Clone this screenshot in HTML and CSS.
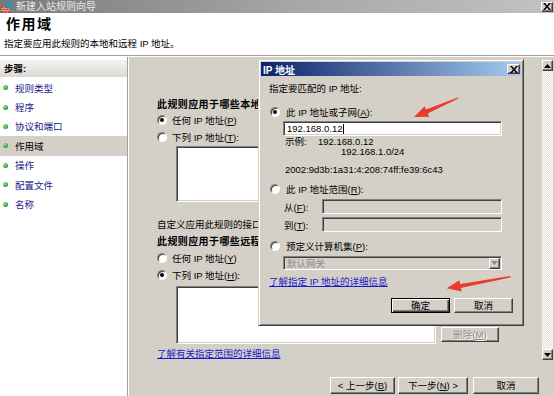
FILE: index.html
```html
<!DOCTYPE html>
<html lang="zh-CN">
<head>
    <meta charset="UTF-8">
    <title>新建入站规则向导</title>
    <link rel="stylesheet" href="styles.css">
</head>
<body>
    <div class="window">
        <div class="titlebar">
            <svg class="app-icon" width="12" height="12" viewBox="0 0 12 12">
                <rect x="0" y="5" width="9" height="7" fill="#b8432c"/>
                <path d="M0 7.3h9M0 9.6h9M3 5v2.3M6 5v2.3M1.5 7.3v2.3M4.5 7.3v2.3M7.5 7.3v2.3M3 9.6V12M6 9.6V12" stroke="#e9c9a8" stroke-width="0.7"/>
                <circle cx="8" cy="4" r="3.6" fill="#2f7ed8"/>
                <path d="M6 2.2c1 .4 1.2 1.4.6 2.2.8.3 1 1.2.5 2M8.6 1c.2.9 1.2 1.2 2 1.4M9.2 5.3c.7-.2 1.4.3 1.8 1" stroke="#4fbf3a" stroke-width="1.1" fill="none"/>
            </svg>
            <span class="title">新建入站规则向导</span>
            <span class="close-btn">
                <svg width="8" height="7" viewBox="0 0 8 7"><path d="M0 0h2l2 2.4 2-2.4h2l-3 3.5 3 3.5h-2l-2-2.4-2 2.4h-2l3-3.5z" fill="#000"/></svg>
            </span>
        </div>

        <div class="header">
            <h1>作用域</h1>
            <p>指定要应用此规则的本地和远程 IP 地址。</p>
        </div>

        <div class="body">
            <aside class="steps">
                <div class="steps-head">步骤:</div>
                <ul>
                    <li><i class="dot"></i>规则类型</li>
                    <li><i class="dot"></i>程序</li>
                    <li><i class="dot"></i>协议和端口</li>
                    <li class="current"><i class="dot"></i>作用域</li>
                    <li><i class="dot"></i>操作</li>
                    <li><i class="dot"></i>配置文件</li>
                    <li><i class="dot"></i>名称</li>
                </ul>
            </aside>

            <main class="pane">
                <div class="scroll">
                    <div class="content">
                        <div class="q">此规则应用于哪些本地 IP 地址?</div>
                        <div class="radio-row"><span class="radio checked"></span><span>任何 IP 地址(<u>P</u>)</span></div>
                        <div class="radio-row"><span class="radio"></span><span>下列 IP 地址(<u>T</u>):</span></div>
                        <div class="list-row first">
                            <div class="field list"></div>
                        </div>

                        <div class="note">自定义应用此规则的接口类型:</div>
                        <div class="q">此规则应用于哪些远程 IP 地址?</div>
                        <div class="radio-row"><span class="radio"></span><span>任何 IP 地址(<u>Y</u>)</span></div>
                        <div class="radio-row"><span class="radio checked"></span><span>下列 IP 地址(<u>H</u>):</span></div>
                        <div class="list-row second">
                            <div class="field list"></div>
                            <div class="list-btns">
                                <button class="btn disabled">删除(<u>M</u>)</button>
                            </div>
                        </div>
                        <a class="link main-link" href="#">了解有关指定范围的详细信息</a>
                    </div>

                    <div class="vscroll">
                        <div class="sb-btn">
                            <svg width="7" height="4" viewBox="0 0 7 4"><path d="M3.5 0L7 4H0z" fill="#000"/></svg>
                        </div>
                        <div class="sb-track"></div>
                        <div class="sb-btn">
                            <svg width="7" height="4" viewBox="0 0 7 4"><path d="M0 0h7L3.5 4z" fill="#000"/></svg>
                        </div>
                    </div>
                </div>

                <div class="bar">
                    <button class="btn nav back">&lt; 上一步(<u>B</u>)</button>
                    <button class="btn nav next">下一步(<u>N</u>) &gt;</button>
                    <button class="btn nav cancel">取消</button>
                </div>
            </main>
        </div>
    </div>

    <div class="dialog">
        <div class="dlg-title">
            <span>IP 地址</span>
            <span class="close-btn">
                <svg width="8" height="7" viewBox="0 0 8 7"><path d="M0 0h2l2 2.4 2-2.4h2l-3 3.5 3 3.5h-2l-2-2.4-2 2.4h-2l3-3.5z" fill="#000"/></svg>
            </span>
        </div>
        <div class="dlg-body">
            <div class="dlg-intro">指定要匹配的 IP 地址:</div>

            <div class="radio-row dlg-radio first"><span class="radio checked"></span><span>此 IP 地址或子网(<u>A</u>):</span></div>
            <div class="field dlg-input">192.168.0.12<span class="caret"></span></div>
            <div class="example">
                <div class="ex-line"><span class="ex-label">示例:</span><span>192.168.0.12</span></div>
                <div class="ex-line indent">192.168.1.0/24</div>
            </div>
            <div class="ipv6">2002:9d3b:1a31:4:208:74ff:fe39:6c43</div>

            <div class="radio-row dlg-radio range"><span class="radio"></span><span>此 IP 地址范围(<u>R</u>):</span></div>
            <div class="range-row">
                <span class="range-label">从(<u>F</u>):</span>
                <div class="field disabled range-input"></div>
            </div>
            <div class="range-row">
                <span class="range-label">到(<u>T</u>):</span>
                <div class="field disabled range-input"></div>
            </div>

            <div class="radio-row dlg-radio preset"><span class="radio"></span><span>预定义计算机集(<u>P</u>):</span></div>
            <div class="field disabled select">
                <span>默认网关</span>
                <span class="drop">
                    <svg width="7" height="4" viewBox="0 0 7 4"><path d="M0 0h7L3.5 4z" fill="#8a8a8a"/></svg>
                </span>
            </div>

            <a class="link dlg-link" href="#">了解指定 IP 地址的详细信息</a>

            <div class="dlg-buttons">
                <button class="btn default">确定</button>
                <button class="btn">取消</button>
            </div>
        </div>
    </div>

    <svg class="arrows" width="554" height="396" viewBox="0 0 554 396">
        <polygon points="414,117 424.6,106.2 425.9,109.6 457.8,97.4 458.3,98.6 427.7,113.4 429.4,116.8" fill="#ea3b2e"/>
        <polygon points="446.7,288.3 459.4,280.2 460.1,283.9 510.2,276 510.4,277.4 460.9,287.9 461.7,291.4" fill="#ea3b2e"/>
    </svg>
</body>
</html>
```

FILE: styles.css
```css
* {
    box-sizing: border-box;
}

body {
    margin: 0;
    width: 554px;
    height: 396px;
    overflow: hidden;
    position: relative;
    background: #d4d0c8;
    font-family: "Liberation Sans", "Noto Sans CJK SC", sans-serif;
    font-size: 9.5px;
    color: #000;
}

u {
    text-decoration: underline;
    text-underline-offset: 1px;
}

.window {
    display: flex;
    flex-direction: column;
    height: 396px;
}

/* title bar */
.titlebar {
    height: 13px;
    display: flex;
    align-items: center;
    gap: 3px;
    padding: 0 1px;
    background: linear-gradient(to right, #7a7a7a, #a8a8a8 55%, #c2c2c2);
    color: #eceae4;
    font-size: 10px;
    line-height: 13px;
}

.titlebar .title {
    flex: 1;
}

.close-btn {
    width: 12px;
    height: 10px;
    display: flex;
    align-items: center;
    justify-content: center;
    background: #d4d0c8;
    border: 1px solid;
    border-color: #fff #404040 #404040 #fff;
    box-shadow: inset -1px -1px #808080;
}

/* header */
.header {
    height: 43px;
    background: #fff;
    padding: 2px 0 0 4px;
    border-bottom: 1px solid #a0a0a0;
}

.header h1 {
    margin: 0 0 0 2px;
    font-size: 14px;
    line-height: 18px;
    letter-spacing: 1.5px;
    font-weight: bold;
}

.header p {
    margin: 3px 0 0 0;
    line-height: 15px;
}

.body {
    flex: 1;
    display: flex;
    min-height: 0;
    border-top: 1px solid #fff;
}

/* steps */
.steps {
    width: 128px;
    background: #fff;
    border-right: 1px solid #a0a0a0;
    padding-top: 2px;
}

.steps-head {
    height: 18px;
    line-height: 18px;
    padding-left: 4px;
    font-weight: bold;
    background: linear-gradient(to bottom, #f4f3f0, #dcd9d2);
    border-top: 1px solid #fff;
}

.steps ul {
    list-style: none;
    margin: 0;
    padding: 1px 0 0 0;
}

.steps li {
    height: 19.4px;
    display: flex;
    align-items: center;
    padding-left: 3px;
    color: #22228a;
}

.steps li.current {
    background: #d4d0c8;
    color: #000;
}

.dot {
    width: 5px;
    height: 5px;
    border-radius: 50%;
    background: radial-gradient(circle at 35% 35%, #9de58e, #3aa832 60%, #2a7d25);
    margin-right: 7px;
}

/* main pane */
.pane {
    flex: 1;
    display: flex;
    flex-direction: column;
    border-left: 1px solid #fff;
    min-width: 0;
}

.scroll {
    flex: 1;
    display: flex;
    min-height: 0;
}

.content {
    flex: 1;
    padding: 40px 0 0 28px;
    overflow: hidden;
    display: flex;
    flex-direction: column;
    align-items: flex-start;
}

/* these lines run in under the dialog, so they stop at its edge */
.q,
.note {
    max-width: 101px;
    overflow: hidden;
    white-space: nowrap;
}

.q {
    font-weight: bold;
    font-size: 10px;
    line-height: 15px;
    letter-spacing: 0.4px;
}

.radio-row {
    height: 17px;
    display: flex;
    align-items: center;
    gap: 5px;
    white-space: nowrap;
}

.radio {
    width: 10px;
    height: 10px;
    border-radius: 50%;
    background: #fff;
    border: 1px solid;
    border-color: #808080 #fff #fff #808080;
    box-shadow: inset 1px 1px #404040;
    display: flex;
    align-items: center;
    justify-content: center;
    flex: none;
}

.radio.checked::after {
    content: "";
    width: 4px;
    height: 4px;
    border-radius: 50%;
    background: #000;
}

.field {
    background: #fff;
    border: 1px solid;
    border-color: #808080 #fff #fff #808080;
    box-shadow: inset 1px 1px #404040, inset -1px -1px #d4d0c8;
}

.field.disabled {
    background: #d4d0c8;
}

.list-row {
    display: flex;
    gap: 5px;
    margin-left: 19px;
}

.list-row .list {
    width: 260px;
}

.list-row.first .list {
    height: 56px;
}

.list-row.second {
    margin-top: 3px;
}

.list-row.second .list {
    height: 58px;
}

.list-btns {
    width: 58px;
    display: flex;
    flex-direction: column;
    justify-content: flex-end;
    padding-bottom: 2px;
}

.btn {
    font: inherit;
    color: #000;
    background: #d4d0c8;
    border: 1px solid;
    border-color: #fff #404040 #404040 #fff;
    box-shadow: inset -1px -1px #808080;
    padding: 0;
    height: 15px;
    line-height: 12px;
    white-space: nowrap;
}

.btn.disabled {
    color: #8f8c86;
    text-shadow: 1px 1px #fff;
}

.note {
    margin-top: 15px;
    line-height: 15px;
}

.note + .q {
    margin-top: 3px;
}

.link {
    color: #1a1ac8;
    text-decoration: underline;
    line-height: 15px;
}

.main-link {
    margin-top: 2px;
}

/* scrollbar */
.vscroll {
    width: 11px;
    margin: 3px 1px 1px 0;
    display: flex;
    flex-direction: column;
    background: #ecebe6;
}

.sb-btn {
    height: 11px;
    display: flex;
    align-items: center;
    justify-content: center;
    background: #d4d0c8;
    border: 1px solid;
    border-color: #fff #404040 #404040 #fff;
    box-shadow: inset -1px -1px #808080;
}

.sb-track {
    flex: 1;
    background: repeating-conic-gradient(#fff 0 25%, #e4e2dc 0 50%) 0 0 / 2px 2px;
    opacity: 0.7;
}

/* bottom buttons */
.bar {
    height: 35px;
    display: flex;
    justify-content: flex-end;
    align-items: flex-end;
    gap: 3px;
    padding: 0 15px 2px 0;
}

.btn.nav {
    height: 17px;
    line-height: 14px;
}

.btn.back {
    width: 65px;
}

.btn.next {
    width: 70px;
}

.btn.cancel {
    width: 66px;
    margin-left: 2px;
}

/* IP address dialog */
.dialog {
    position: absolute;
    left: 258px;
    top: 59px;
    width: 266px;
    height: 267px;
    background: #d4d0c8;
    border: 1px solid;
    border-color: #d4d0c8 #404040 #404040 #d4d0c8;
    box-shadow: inset 1px 1px #fff, inset -1px -1px #808080;
    padding: 2px;
}

.dlg-title {
    height: 14px;
    display: flex;
    align-items: center;
    justify-content: space-between;
    padding: 0 1px 0 2px;
    background: linear-gradient(to right, #0a246a, #a6caf0);
    color: #fff;
    font-weight: bold;
    font-size: 10px;
}

.dlg-title .close-btn {
    width: 13px;
}

.dlg-body {
    padding: 5px 8px 0 8px;
    display: flex;
    flex-direction: column;
    align-items: flex-start;
}

.dlg-intro {
    line-height: 15px;
}

.dlg-radio {
    height: 15px;
    gap: 6px;
    margin-left: 1px;
}

.dlg-radio.first {
    margin-top: 8px;
}

.dlg-radio.range {
    margin-top: 4px;
}

.dlg-radio.preset {
    margin-top: 6px;
}

.dlg-input {
    width: 219px;
    height: 15px;
    margin: 2px 0 0 14px;
    padding-left: 3px;
    line-height: 13px;
    display: flex;
    align-items: center;
}

.caret {
    width: 1px;
    height: 10px;
    background: #000;
    margin-left: 1px;
}

.example {
    margin: 1px 0 0 16px;
}

.ex-line {
    line-height: 10px;
    display: flex;
}

.ex-label {
    width: 33px;
}

.ex-line.indent {
    padding-left: 56px;
}

.ipv6 {
    margin: 6px 0 0 16px;
    line-height: 14px;
}

.range-row {
    display: flex;
    align-items: center;
    margin-left: 15px;
    margin-top: 3px;
}

.range-label {
    width: 38px;
}

.range-input {
    width: 180px;
    height: 15px;
}

.select {
    width: 219px;
    height: 14px;
    margin: 3px 0 0 14px;
    padding: 0 1px 0 3px;
    display: flex;
    align-items: center;
    justify-content: space-between;
    color: #8f8c86;
}

.drop {
    width: 11px;
    height: 11px;
    display: flex;
    align-items: center;
    justify-content: center;
    border: 1px solid;
    border-color: #fff #404040 #404040 #fff;
    box-shadow: inset -1px -1px #808080;
}

.dlg-link {
    margin-top: 5px;
    line-height: 14px;
}

.dlg-buttons {
    align-self: stretch;
    display: flex;
    justify-content: flex-end;
    gap: 4px;
    margin-top: 9px;
}

.dlg-buttons .btn {
    width: 59px;
}

.btn.default {
    border-color: #000;
    box-shadow: inset 1px 1px #fff, inset -1px -1px #404040, inset -2px -2px #808080;
}

/* annotation arrows drawn over the screenshot */
.arrows {
    position: absolute;
    left: 0;
    top: 0;
    pointer-events: none;
}
```
